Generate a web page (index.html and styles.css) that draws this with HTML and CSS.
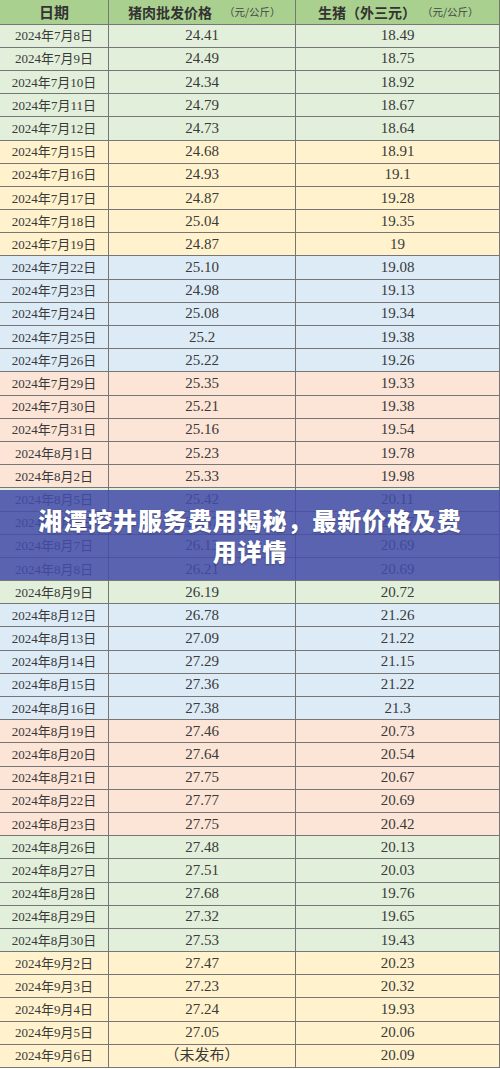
FILE: index.html
```html
<!DOCTYPE html>
<html lang="zh">
<head>
<meta charset="utf-8">
<link rel="stylesheet" href="styles.css">
</head>
<body>
<div class="sheet">
  <div class="row head">
    <div class="cell">日期</div>
    <div class="cell">猪肉批发价格<span class="unit">（元/公斤）</span></div>
    <div class="cell">生猪（外三元）<span class="unit">（元/公斤）</span></div>
  </div>
  <div class="row g"><div class="cell">2024年7月8日</div><div class="cell">24.41</div><div class="cell">18.49</div></div>
  <div class="row g"><div class="cell">2024年7月9日</div><div class="cell">24.49</div><div class="cell">18.75</div></div>
  <div class="row g"><div class="cell">2024年7月10日</div><div class="cell">24.34</div><div class="cell">18.92</div></div>
  <div class="row g"><div class="cell">2024年7月11日</div><div class="cell">24.79</div><div class="cell">18.67</div></div>
  <div class="row g"><div class="cell">2024年7月12日</div><div class="cell">24.73</div><div class="cell">18.64</div></div>
  <div class="row y"><div class="cell">2024年7月15日</div><div class="cell">24.68</div><div class="cell">18.91</div></div>
  <div class="row y"><div class="cell">2024年7月16日</div><div class="cell">24.93</div><div class="cell">19.1</div></div>
  <div class="row y"><div class="cell">2024年7月17日</div><div class="cell">24.87</div><div class="cell">19.28</div></div>
  <div class="row y"><div class="cell">2024年7月18日</div><div class="cell">25.04</div><div class="cell">19.35</div></div>
  <div class="row y"><div class="cell">2024年7月19日</div><div class="cell">24.87</div><div class="cell">19</div></div>
  <div class="row b"><div class="cell">2024年7月22日</div><div class="cell">25.10</div><div class="cell">19.08</div></div>
  <div class="row b"><div class="cell">2024年7月23日</div><div class="cell">24.98</div><div class="cell">19.13</div></div>
  <div class="row b"><div class="cell">2024年7月24日</div><div class="cell">25.08</div><div class="cell">19.34</div></div>
  <div class="row b"><div class="cell">2024年7月25日</div><div class="cell">25.2</div><div class="cell">19.38</div></div>
  <div class="row b"><div class="cell">2024年7月26日</div><div class="cell">25.22</div><div class="cell">19.26</div></div>
  <div class="row p"><div class="cell">2024年7月29日</div><div class="cell">25.35</div><div class="cell">19.33</div></div>
  <div class="row p"><div class="cell">2024年7月30日</div><div class="cell">25.21</div><div class="cell">19.38</div></div>
  <div class="row p"><div class="cell">2024年7月31日</div><div class="cell">25.16</div><div class="cell">19.54</div></div>
  <div class="row p"><div class="cell">2024年8月1日</div><div class="cell">25.23</div><div class="cell">19.78</div></div>
  <div class="row p"><div class="cell">2024年8月2日</div><div class="cell">25.33</div><div class="cell">19.98</div></div>
  <div class="row g"><div class="cell">2024年8月5日</div><div class="cell">25.42</div><div class="cell">20.11</div></div>
  <div class="row g"><div class="cell">2024年8月6日</div><div class="cell">25.87</div><div class="cell">20.47</div></div>
  <div class="row g"><div class="cell">2024年8月7日</div><div class="cell">26.13</div><div class="cell">20.69</div></div>
  <div class="row g"><div class="cell">2024年8月8日</div><div class="cell">26.21</div><div class="cell">20.69</div></div>
  <div class="row g"><div class="cell">2024年8月9日</div><div class="cell">26.19</div><div class="cell">20.72</div></div>
  <div class="row b"><div class="cell">2024年8月12日</div><div class="cell">26.78</div><div class="cell">21.26</div></div>
  <div class="row b"><div class="cell">2024年8月13日</div><div class="cell">27.09</div><div class="cell">21.22</div></div>
  <div class="row b"><div class="cell">2024年8月14日</div><div class="cell">27.29</div><div class="cell">21.15</div></div>
  <div class="row b"><div class="cell">2024年8月15日</div><div class="cell">27.36</div><div class="cell">21.22</div></div>
  <div class="row b"><div class="cell">2024年8月16日</div><div class="cell">27.38</div><div class="cell">21.3</div></div>
  <div class="row p"><div class="cell">2024年8月19日</div><div class="cell">27.46</div><div class="cell">20.73</div></div>
  <div class="row p"><div class="cell">2024年8月20日</div><div class="cell">27.64</div><div class="cell">20.54</div></div>
  <div class="row p"><div class="cell">2024年8月21日</div><div class="cell">27.75</div><div class="cell">20.67</div></div>
  <div class="row p"><div class="cell">2024年8月22日</div><div class="cell">27.77</div><div class="cell">20.69</div></div>
  <div class="row p"><div class="cell">2024年8月23日</div><div class="cell">27.75</div><div class="cell">20.42</div></div>
  <div class="row g"><div class="cell">2024年8月26日</div><div class="cell">27.48</div><div class="cell">20.13</div></div>
  <div class="row g"><div class="cell">2024年8月27日</div><div class="cell">27.51</div><div class="cell">20.03</div></div>
  <div class="row g"><div class="cell">2024年8月28日</div><div class="cell">27.68</div><div class="cell">19.76</div></div>
  <div class="row g"><div class="cell">2024年8月29日</div><div class="cell">27.32</div><div class="cell">19.65</div></div>
  <div class="row g"><div class="cell">2024年8月30日</div><div class="cell">27.53</div><div class="cell">19.43</div></div>
  <div class="row y"><div class="cell">2024年9月2日</div><div class="cell">27.47</div><div class="cell">20.23</div></div>
  <div class="row y"><div class="cell">2024年9月3日</div><div class="cell">27.23</div><div class="cell">20.32</div></div>
  <div class="row y"><div class="cell">2024年9月4日</div><div class="cell">27.24</div><div class="cell">19.93</div></div>
  <div class="row y"><div class="cell">2024年9月5日</div><div class="cell">27.05</div><div class="cell">20.06</div></div>
  <div class="row y"><div class="cell">2024年9月6日</div><div class="cell">（未发布）</div><div class="cell">20.09</div></div>

  <div class="banner">
    <h1 class="title">湘潭挖井服务费用揭秘，最新价格及费用详情</h1>
  </div>
</div>
</body>
</html>
```

FILE: styles.css
```css
html, body {
  margin: 0;
  padding: 0;
  background: #ffffff;
}

.sheet {
  position: relative;
  width: 500px;
  height: 1069px;
  overflow: hidden;
  font-family: "Liberation Serif", "Noto Sans CJK SC", serif;
  color: #3a3a3a;
}

.row {
  display: grid;
  grid-template-columns: 108px 187px 1fr;
  box-sizing: border-box;
  height: 23.2px;
  border-bottom: 1px solid #767676;
  border-right: 1px solid #767676;
}

.cell {
  display: flex;
  align-items: center;
  justify-content: center;
  font-size: 15px;
  line-height: 1;
  white-space: nowrap;
}

.cell:first-child {
  font-size: 13px;
}

.cell + .cell {
  border-left: 1px solid #767676;
}

.head {
  height: 24.6px;
  background: #a9d08e;
}

.head .cell {
  font-family: "Noto Sans CJK SC", sans-serif;
  font-weight: 700;
  font-size: 14px;
  color: #333333;
}

.head .cell:first-child {
  font-size: 15px;
}

.head .cell:nth-child(2) {
  justify-content: flex-start;
  padding-left: 19px;
}

.head .cell:nth-child(3) {
  justify-content: flex-start;
  padding-left: 22px;
}

.unit {
  font-weight: 400;
  font-size: 10.5px;
  margin-left: 12px;
  color: #444444;
}

.head .cell:nth-child(3) .unit {
  margin-left: 6px;
}

.g { background: #e2efda; }
.y { background: #fff2cc; }
.b { background: #ddebf7; }
.p { background: #fce4d6; }

.banner {
  position: absolute;
  left: 0;
  right: 0;
  top: 490px;
  height: 90px;
  display: flex;
  align-items: center;
  justify-content: center;
  background: rgba(66, 76, 168, 0.86);
}

.title {
  margin: 0;
  padding: 0 36px;
  text-align: center;
  font-family: "Noto Sans CJK SC", sans-serif;
  font-weight: 900;
  font-size: 24px;
  letter-spacing: 0.9px;
  line-height: 31px;
  color: #ffffff;
  text-shadow: 0 1px 2px rgba(0, 0, 0, 0.3);
}
```
